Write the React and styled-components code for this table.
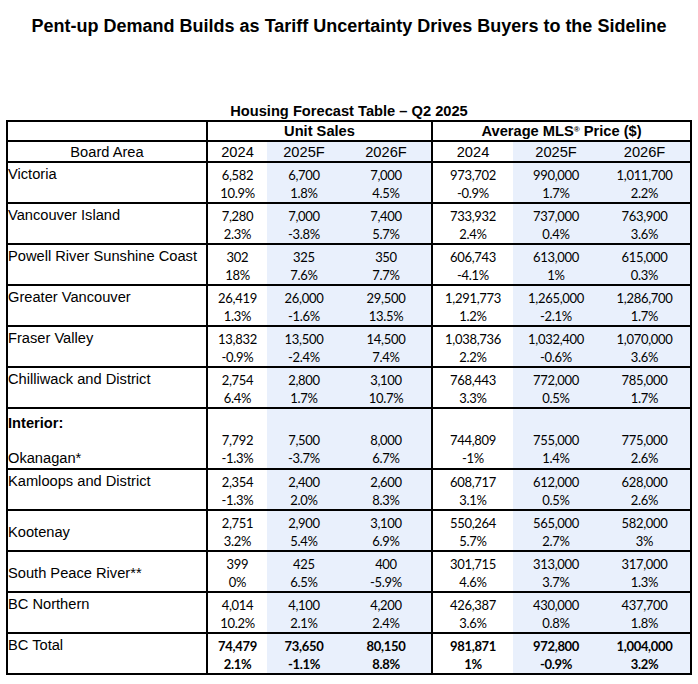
import React from "react";
import styled, { createGlobalStyle } from "styled-components";

const Global = createGlobalStyle`
  html, body { margin: 0; padding: 0; background: #fff; }
  body { font-family: "Liberation Sans", Arial, sans-serif; color: #000; }
`;

const SHADE = "#e9f0fc";

const Page = styled.div`
  width: 698px;
  display: flex;
  flex-direction: column;
  align-items: center;
`;

const Title = styled.h1`
  margin: 16px 0 0;
  font-family: "Liberation Sans", Arial, sans-serif;
  font-weight: 700;
  font-size: 18px;
  line-height: 20px;
  letter-spacing: 0;
  text-align: center;
`;

const Caption = styled.div`
  margin-top: 66px;
  font-weight: 700;
  font-size: 14.67px;
  line-height: 18px;
  text-align: center;
`;

const Table = styled.table`
  border-collapse: collapse;
  table-layout: fixed;
  width: 684px;
  border: 2px solid #000;
`;

const HeadCell = styled.th`
  padding: 0;
  height: ${(p) => p.$h || 19}px;
  font-weight: ${(p) => (p.$bold ? 700 : 400)};
  font-size: 14.67px;
  line-height: 18px;
  text-align: center;
  vertical-align: middle;
  background: ${(p) => (p.$shade ? SHADE : "#fff")};
  border-left: ${(p) => (p.$divider ? "2px solid #000" : "none")};
  border-bottom: 2px solid #000;
`;

const Row = styled.tr`
  height: ${(p) => p.$h || 39}px;
  border-bottom: 2px solid #000;
`;

const LabelCell = styled.td`
  padding: ${(p) => (p.$mid ? "3px 0 0" : "2px 0 0")};
  font-size: 14.67px;
  line-height: 19px;
  vertical-align: ${(p) => (p.$mid ? "middle" : "top")};
  border-right: 2px solid #000;
  white-space: nowrap;
`;

const Label = styled.div`
  font-weight: ${(p) => (p.$bold ? 700 : 400)};
  margin-top: ${(p) => p.$mt || 0}px;
`;

const NumCell = styled.td`
  padding: ${(p) => (p.$bottom ? "0 0 1px" : "3px 0 0")};
  text-align: center;
  vertical-align: ${(p) => (p.$bottom ? "bottom" : "top")};
  background: ${(p) => (p.$shade ? SHADE : "#fff")};
  border-left: ${(p) => (p.$divider ? "2px solid #000" : "none")};
  font-family: Lato, "Open Sans", sans-serif;
  font-size: 13px;
  letter-spacing: -0.3px;
  font-weight: ${(p) => (p.$bold ? 700 : 400)};
`;

const Num = styled.div`
  line-height: 18px;
  height: 18px;
`;

const Reg = styled.sup`
  font-size: 8px;
  vertical-align: 4px;
  line-height: 0;
`;

const rows = [
  { name: "Victoria", v: [["6,582", "10.9%"], ["6,700", "1.8%"], ["7,000", "4.5%"], ["973,702", "-0.9%"], ["990,000", "1.7%"], ["1,011,700", "2.2%"]] },
  { name: "Vancouver Island", v: [["7,280", "2.3%"], ["7,000", "-3.8%"], ["7,400", "5.7%"], ["733,932", "2.4%"], ["737,000", "0.4%"], ["763,900", "3.6%"]] },
  { name: "Powell River Sunshine Coast", v: [["302", "18%"], ["325", "7.6%"], ["350", "7.7%"], ["606,743", "-4.1%"], ["613,000", "1%"], ["615,000", "0.3%"]] },
  { name: "Greater Vancouver", v: [["26,419", "1.3%"], ["26,000", "-1.6%"], ["29,500", "13.5%"], ["1,291,773", "1.2%"], ["1,265,000", "-2.1%"], ["1,286,700", "1.7%"]] },
  { name: "Fraser Valley", v: [["13,832", "-0.9%"], ["13,500", "-2.4%"], ["14,500", "7.4%"], ["1,038,736", "2.2%"], ["1,032,400", "-0.6%"], ["1,070,000", "3.6%"]] },
  { name: "Chilliwack and District", v: [["2,754", "6.4%"], ["2,800", "1.7%"], ["3,100", "10.7%"], ["768,443", "3.3%"], ["772,000", "0.5%"], ["785,000", "1.7%"]] },
  { name: "Okanagan*", interior: true, v: [["7,792", "-1.3%"], ["7,500", "-3.7%"], ["8,000", "6.7%"], ["744,809", "-1%"], ["755,000", "1.4%"], ["775,000", "2.6%"]] },
  { name: "Kamloops and District", v: [["2,354", "-1.3%"], ["2,400", "2.0%"], ["2,600", "8.3%"], ["608,717", "3.1%"], ["612,000", "0.5%"], ["628,000", "2.6%"]] },
  { name: "Kootenay", mid: true, v: [["2,751", "3.2%"], ["2,900", "5.4%"], ["3,100", "6.9%"], ["550,264", "5.7%"], ["565,000", "2.7%"], ["582,000", "3%"]] },
  { name: "South Peace River**", mid: true, v: [["399", "0%"], ["425", "6.5%"], ["400", "-5.9%"], ["301,715", "4.6%"], ["313,000", "3.7%"], ["317,000", "1.3%"]] },
  { name: "BC Northern", v: [["4,014", "10.2%"], ["4,100", "2.1%"], ["4,200", "2.4%"], ["426,387", "3.6%"], ["430,000", "0.8%"], ["437,700", "1.8%"]] },
  { name: "BC Total", bold: true, v: [["74,479", "2.1%"], ["73,650", "-1.1%"], ["80,150", "8.8%"], ["981,871", "1%"], ["972,800", "-0.9%"], ["1,004,000", "3.2%"]] },
];

const shaded = [false, true, true, false, true, true];
const widths = [200, 60, 74, 91, 81, 86, 92];
const years = ["2024", "2025F", "2026F", "2024", "2025F", "2026F"];

export default function App() {
  return (
    <Page>
      <Global />
      <Title>Pent-up Demand Builds as Tariff Uncertainty Drives Buyers to the Sideline</Title>
      <Caption>Housing Forecast Table – Q2 2025</Caption>
      <Table>
        <colgroup>
          {widths.map((w, i) => (
            <col key={i} style={{ width: w }} />
          ))}
        </colgroup>
        <thead>
          <tr>
            <HeadCell $h={18} />
            <HeadCell $h={18} $bold $divider colSpan={3}>Unit Sales</HeadCell>
            <HeadCell $h={18} $bold $divider colSpan={3}>
              Average MLS<Reg>®</Reg> Price ($)
            </HeadCell>
          </tr>
          <tr>
            <HeadCell $h={19}>Board Area</HeadCell>
            {years.map((y, i) => (
              <HeadCell key={i} $h={19} $shade={shaded[i]} $divider={i === 0 || i === 3}>
                {y}
              </HeadCell>
            ))}
          </tr>
        </thead>
        <tbody>
          {rows.map((r) => (
            <Row key={r.name} $h={r.interior ? 59 : 39}>
              <LabelCell $mid={r.mid}>
                {r.interior ? (
                  <>
                    <Label $bold $mt={3}>Interior:</Label>
                    <Label $mt={16}>{r.name}</Label>
                  </>
                ) : (
                  <Label>{r.name}</Label>
                )}
              </LabelCell>
              {r.v.map((pair, i) => (
                <NumCell
                  key={i}
                  $shade={shaded[i]}
                  $divider={i === 3}
                  $bold={r.bold}
                  $bottom={r.interior}
                >
                  <Num>{pair[0]}</Num>
                  <Num>{pair[1]}</Num>
                </NumCell>
              ))}
            </Row>
          ))}
        </tbody>
      </Table>
    </Page>
  );
}
